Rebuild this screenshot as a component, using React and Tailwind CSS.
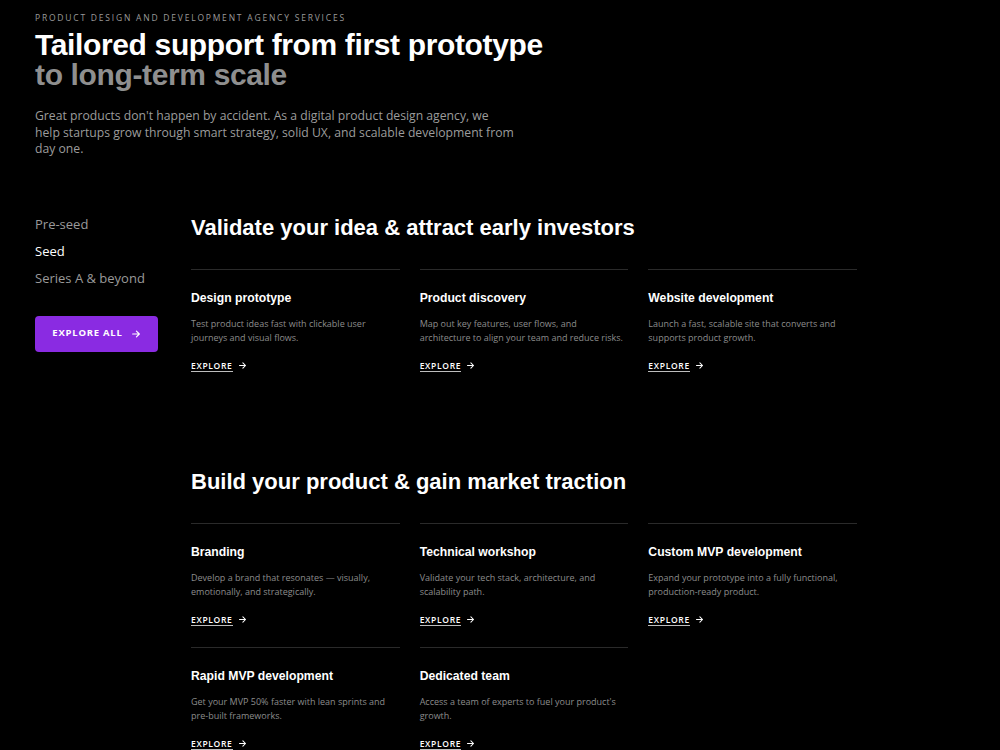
import React from 'react';

const sections = [
    {
        title: 'Validate your idea & attract early investors',
        services: [
            { name: 'Design prototype', text: 'Test product ideas fast with clickable user journeys and visual flows.' },
            { name: 'Product discovery', text: 'Map out key features, user flows, and architecture to align your team and reduce risks.' },
            { name: 'Website development', text: 'Launch a fast, scalable site that converts and supports product growth.' },
        ],
    },
    {
        title: 'Build your product & gain market traction',
        services: [
            { name: 'Branding', text: 'Develop a brand that resonates \u2014 visually, emotionally, and strategically.' },
            { name: 'Technical workshop', text: 'Validate your tech stack, architecture, and scalability path.' },
            { name: 'Custom MVP development', text: 'Expand your prototype into a fully functional, production-ready product.' },
            { name: 'Rapid MVP development', text: 'Get your MVP 50% faster with lean sprints and pre-built frameworks.' },
            { name: 'Dedicated team', text: "Access a team of experts to fuel your product's growth." },
        ],
    },
];

const stages = [
    { label: 'Pre-seed', active: false },
    { label: 'Seed', active: true },
    { label: 'Series A & beyond', active: false },
];

function Arrow({ className }) {
    return (
        <svg viewBox="0 0 12 12" fill="none" stroke="currentColor" strokeWidth="1.4" strokeLinecap="round" strokeLinejoin="round" className={className}>
            <path d="M2 6h8M6.5 2.5 10 6l-3.5 3.5" />
        </svg>
    );
}

function ServiceCard({ name, text }) {
    return (
        <div className="border-t border-[#2a2a2a] pt-[21px] pb-[11px]">
            <h3 className="font-['Liberation_Sans',Arial,sans-serif] font-bold text-[12.2px] leading-[14px] text-white">{name}</h3>
            <p className="mt-[12px] text-[9px] leading-[14px] text-[#8c8c8c]">{text}</p>
            <a href="#" className="mt-[15px] flex items-center gap-[5px] text-white h-[12px]">
                <span className="text-[8.5px] font-semibold tracking-[0.08em] border-b border-[#bdbdbd] leading-[11px]">EXPLORE</span>
                <Arrow className="w-[9px] h-[9px]" />
            </a>
        </div>
    );
}

export default function App() {
    return (
        <div className="min-h-screen bg-black text-white font-['Open_Sans',sans-serif] px-[35px] pt-[12px] pb-10">
            <p className="text-[8.5px] leading-[12px] tracking-[0.21em] text-[#9a9a9a]">PRODUCT DESIGN AND DEVELOPMENT AGENCY SERVICES</p>
            <h1 className="mt-[6px] font-['Liberation_Sans',Arial,sans-serif] font-bold text-[30px] leading-[30px] tracking-[-0.012em]">
                <span className="block text-white">Tailored support from first prototype</span>
                <span className="block text-[#8f8f8f]">to long-term scale</span>
            </h1>
            <p className="mt-[18px] w-[520px] text-[12.2px] leading-[16.5px] text-[#9c9c9c]">
                Great products don't happen by accident. As a digital product design agency, we<br />
                help startups grow through smart strategy, solid UX, and scalable development from<br />
                day one.
            </p>

            <div className="mt-[57px] flex">
                <aside className="w-[156px] shrink-0">
                    <ul className="flex flex-col gap-[9px]">
                        {stages.map((s) => (
                            <li key={s.label} className={`text-[13px] leading-[18px] ${s.active ? 'text-white' : 'text-[#9a9a9a]'}`}>{s.label}</li>
                        ))}
                    </ul>
                    <button className="mt-[29px] w-[123px] h-[36px] rounded-[4px] bg-[#8a2be2] flex items-center justify-center gap-[8px] text-white">
                        <span className="text-[9.5px] font-bold tracking-[0.08em]">EXPLORE ALL</span>
                        <Arrow className="w-[10px] h-[10px]" />
                    </button>
                </aside>

                <main className="w-[666px] flex flex-col gap-[86px]">
                    {sections.map((sec) => (
                        <section key={sec.title}>
                            <h2 className="font-['Liberation_Sans',Arial,sans-serif] font-bold text-[22px] leading-[26px]">{sec.title}</h2>
                            <div className="mt-[28px] grid grid-cols-3 gap-x-[20px] gap-y-[10px]">
                                {sec.services.map((svc) => (
                                    <ServiceCard key={svc.name} {...svc} />
                                ))}
                            </div>
                        </section>
                    ))}
                </main>
            </div>
        </div>
    );
}
